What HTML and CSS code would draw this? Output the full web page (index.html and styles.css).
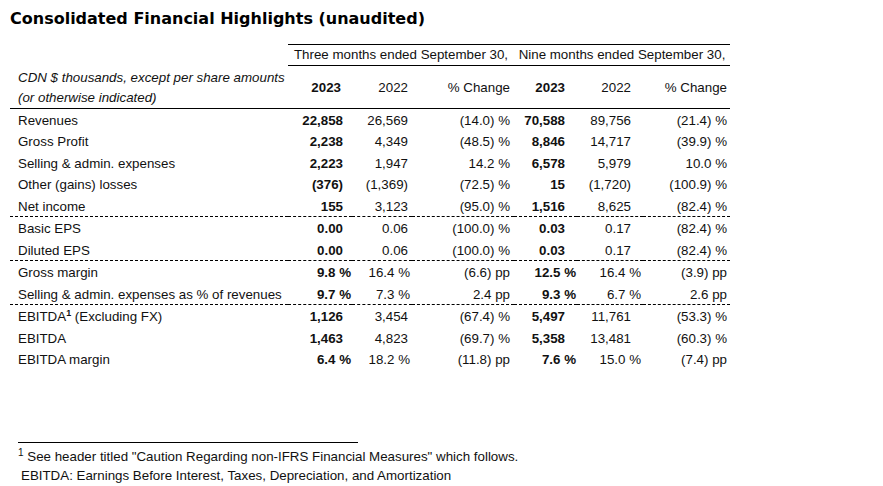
FILE: index.html
```html
<!DOCTYPE html>
<html lang="en">
<head>
<meta charset="utf-8">
<title>Consolidated Financial Highlights</title>
<link rel="stylesheet" href="styles.css">
</head>
<body>
<div class="page">
  <h1 class="title">Consolidated Financial Highlights (unaudited)</h1>
  <table class="fin">
    <colgroup>
      <col class="c-label"><col class="c-1"><col class="c-2"><col class="c-3"><col class="c-4"><col class="c-5"><col class="c-6">
    </colgroup>
    <thead>
      <tr class="grp">
        <th class="blank"></th>
        <th colspan="3" class="g">Three months ended September 30,</th>
        <th colspan="3" class="g">Nine months ended September 30,</th>
      </tr>
      <tr class="yrs">
        <th class="unit">CDN $ thousands, except per share amounts<br>(or otherwise indicated)</th>
        <th>2023</th><th>2022</th><th>% Change</th><th>2023</th><th>2022</th><th>% Change</th>
      </tr>
    </thead>
    <tbody>
      <tr><td>Revenues</td><td>22,858</td><td>26,569</td><td>(14.0) %</td><td>70,588</td><td>89,756</td><td>(21.4) %</td></tr>
      <tr><td>Gross Profit</td><td>2,238</td><td>4,349</td><td>(48.5) %</td><td>8,846</td><td>14,717</td><td>(39.9) %</td></tr>
      <tr><td>Selling &amp; admin. expenses</td><td>2,223</td><td>1,947</td><td>14.2 %</td><td>6,578</td><td>5,979</td><td>10.0 %</td></tr>
      <tr><td>Other (gains) losses</td><td>(376)</td><td>(1,369)</td><td>(72.5) %</td><td>15</td><td>(1,720)</td><td>(100.9) %</td></tr>
      <tr class="sep"><td>Net income</td><td>155</td><td>3,123</td><td>(95.0) %</td><td>1,516</td><td>8,625</td><td>(82.4) %</td></tr>
      <tr><td>Basic EPS</td><td>0.00</td><td>0.06</td><td>(100.0) %</td><td>0.03</td><td>0.17</td><td>(82.4) %</td></tr>
      <tr class="sep"><td>Diluted EPS</td><td>0.00</td><td>0.06</td><td>(100.0) %</td><td>0.03</td><td>0.17</td><td>(82.4) %</td></tr>
      <tr class="pct"><td>Gross margin</td><td>9.8 %</td><td>16.4 %</td><td>(6.6) pp</td><td>12.5 %</td><td>16.4 %</td><td>(3.9) pp</td></tr>
      <tr class="pct sep"><td>Selling &amp; admin. expenses as % of revenues</td><td>9.7 %</td><td>7.3 %</td><td>2.4 pp</td><td>9.3 %</td><td>6.7 %</td><td>2.6 pp</td></tr>
      <tr><td>EBITDA<sup>1</sup> (Excluding FX)</td><td>1,126</td><td>3,454</td><td>(67.4) %</td><td>5,497</td><td>11,761</td><td>(53.3) %</td></tr>
      <tr><td>EBITDA</td><td>1,463</td><td>4,823</td><td>(69.7) %</td><td>5,358</td><td>13,481</td><td>(60.3) %</td></tr>
      <tr class="pct"><td>EBITDA margin</td><td>6.4 %</td><td>18.2 %</td><td>(11.8) pp</td><td>7.6 %</td><td>15.0 %</td><td>(7.4) pp</td></tr>
    </tbody>
  </table>
  <div class="notes">
    <div class="rule"></div>
    <p class="note"><sup>1</sup> See header titled "Caution Regarding non-IFRS Financial Measures" which follows.</p>
    <p class="note indent">EBITDA: Earnings Before Interest, Taxes, Depreciation, and Amortization</p>
  </div>
</div>
</body>
</html>
```

FILE: styles.css
```css
html, body {
  margin: 0;
  padding: 0;
  background: #fff;
  color: #111;
}

.page {
  padding: 9px 10px 0 10px;
}

.title {
  margin: 0 0 16px 0;
  font-family: "DejaVu Sans", Verdana, sans-serif;
  font-weight: bold;
  font-size: 16px;
  line-height: 19px;
  color: #000;
}

.fin {
  border-collapse: collapse;
  table-layout: fixed;
  width: 720px;
  font-family: "Liberation Sans", Arial, sans-serif;
  font-size: 13.33px;
}

.c-label { width: 278px; }
.c-1 { width: 64px; }
.c-2 { width: 60px; }
.c-3 { width: 102px; }
.c-4 { width: 63px; }
.c-5 { width: 66px; }
.c-6 { width: 87px; }

.fin th, .fin td {
  padding: 0;
  white-space: nowrap;
  text-align: right;
  font-weight: normal;
}

.fin td {
  padding-top: 3px;
  line-height: 18.5px;
}

.fin td:first-child {
  text-align: left;
  padding-left: 8px;
}

.fin td:nth-child(2), .yrs th:nth-child(2) { padding-right: 9px; font-weight: bold; }
.yrs th:nth-child(2) { padding-right: 11px; }
.fin td:nth-child(3), .yrs th:nth-child(3) { padding-right: 4px; }
.fin td:nth-child(4), .yrs th:nth-child(4) { padding-right: 4px; }
.fin td:nth-child(5), .yrs th:nth-child(5) { padding-right: 12px; font-weight: bold; }
.fin td:nth-child(6), .yrs th:nth-child(6) { padding-right: 12px; }
.fin td:nth-child(7), .yrs th:nth-child(7) { padding-right: 3px; }

.pct td:nth-child(2) { padding-right: 1px; }
.pct td:nth-child(3) { padding-right: 2px; }
.pct td:nth-child(5) { padding-right: 1px; }
.pct td:nth-child(6) { padding-right: 2px; }

.grp th.g {
  text-align: center;
  line-height: 20px;
  border-top: 1px solid #000;
  border-bottom: 1px solid #000;
}

.yrs th {
  line-height: 20px;
  padding-top: 2px;
  padding-bottom: 0;
  border-bottom: 1px solid #000;
}

.yrs th.unit {
  text-align: left;
  font-style: italic;
  padding-left: 8px;
}

.sep td {
  border-bottom: 1px dashed #000;
}

.fin sup {
  font-size: 9px;
  line-height: 0;
  vertical-align: 5px;
  font-weight: bold;
}

.notes {
  margin-top: 72px;
  padding-left: 8px;
  font-family: "Liberation Sans", Arial, sans-serif;
  font-size: 13.33px;
  line-height: 19px;
}

.rule {
  width: 340px;
  border-top: 1px solid #000;
  margin-bottom: 4px;
}

.note {
  margin: 0;
}

.note sup {
  font-size: 10px;
  line-height: 0;
  vertical-align: 5px;
}

.indent {
  padding-left: 3px;
}
```
